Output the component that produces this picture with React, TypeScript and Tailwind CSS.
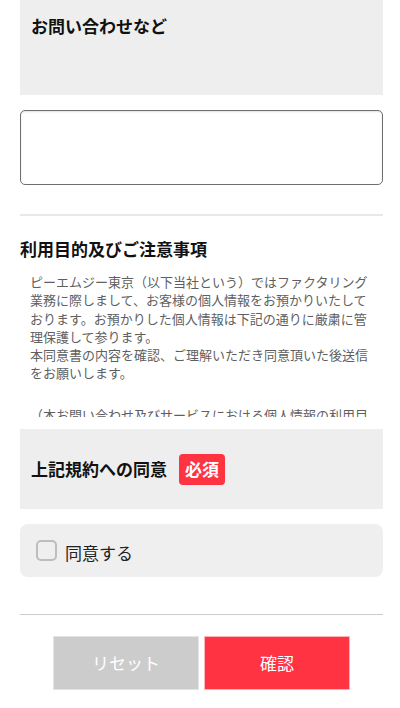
import React from "react";

const sans = { fontFamily: '"Noto Sans CJK JP", "Noto Sans", sans-serif' };

export default function App() {
  return (
    <div className="w-[400px] min-h-[708px] bg-white overflow-hidden" style={sans}>
      <div className="ml-[20px] w-[363px] flex flex-col">
        <div className="h-[95px] bg-[#eeeeee] px-[11px] pt-[14px]">
          <div className="text-[17px] leading-[24px] font-bold text-[#111]">お問い合わせなど</div>
        </div>

        <textarea className="mt-[15px] h-[75px] w-full resize-none rounded-[5px] border border-[#6e6e6e] bg-white shadow-[inset_0_1px_2px_rgba(0,0,0,0.12)] outline-none" />

        <div className="mt-[29px] h-[2px] bg-[#e8e8e8]" />

        <div className="mt-[21px] text-[17px] leading-[24px] font-bold text-[#111]">利用目的及びご注意事項</div>

        <div className="h-[156px] overflow-hidden pt-[12px] pl-[10px] pr-[10px] text-[13px] leading-[18.3px] text-[#5f5f5f]">
          <p>
            ピーエムジー東京（以下当社という）ではファクタリング業務に際しまして、お客様の個人情報をお預かりいたしております。お預かりした個人情報は下記の通りに厳粛に管理保護して参ります。
            <br />
            本同意書の内容を確認、ご理解いただき同意頂いた後送信をお願いします。
          </p>
          <p className="mt-[23px]">（本お問い合わせ及びサービスにおける個人情報の利用目的）</p>
        </div>

        <div className="mt-[12px] flex h-[80px] items-center bg-[#eeeeee] pl-[11px]">
          <span className="text-[17px] leading-[24px] font-bold text-[#111]">上記規約への同意</span>
          <span className="ml-[12px] flex h-[31px] items-center rounded-[4px] bg-[#ff3341] px-[6px] text-[17px] font-bold text-white">必須</span>
        </div>

        <label className="mt-[15px] flex h-[53px] items-center rounded-[8px] bg-[#efefef] pl-[16px]">
          <span className="h-[21px] w-[21px] rounded-[5px] border-2 border-[#bdbdbd]" />
          <span className="ml-[8px] text-[17px] leading-[24px] text-[#222] translate-y-[2px]">同意する</span>
        </label>

        <div className="mt-[37px] h-[1px] bg-[#cccccc]" />

        <div className="mt-[21px] flex justify-center gap-[5px]">
          <button className="flex h-[54px] w-[146px] items-center justify-center border border-[#e4e4e4] bg-[#cccccc] text-[17px] text-white">リセット</button>
          <button className="flex h-[54px] w-[146px] items-center justify-center border border-[#ffb3b8] bg-[#ff3341] text-[17px] text-white">確認</button>
        </div>
      </div>
    </div>
  );
}
